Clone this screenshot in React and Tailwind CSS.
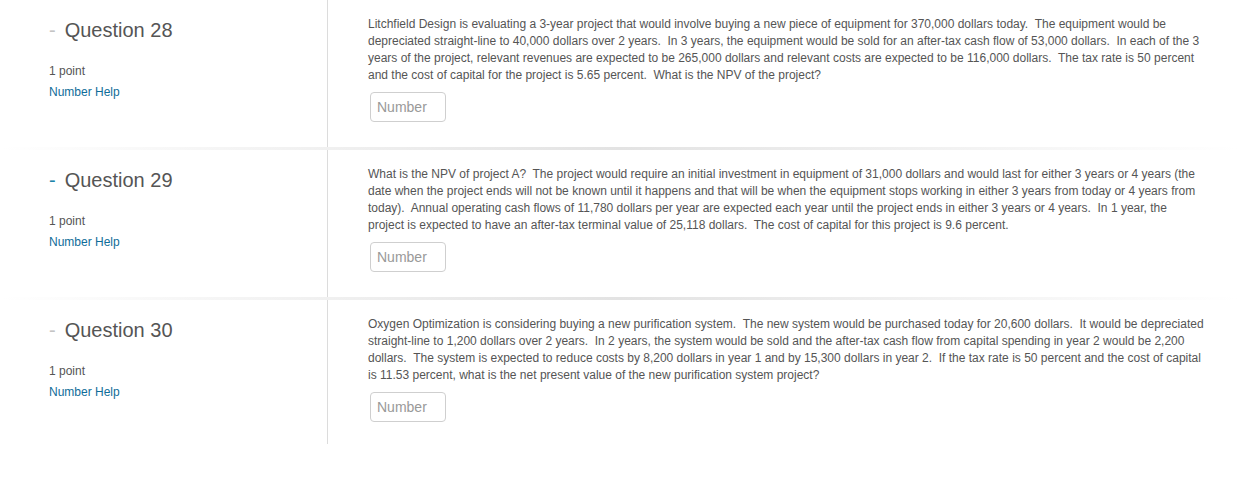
const questions = [
  {
    id: 28,
    activeDash: false,
    lines: [
      "Litchfield Design is evaluating a 3-year project that would involve buying a new piece of equipment for 370,000 dollars today.  The equipment would be",
      "depreciated straight-line to 40,000 dollars over 2 years.  In 3 years, the equipment would be sold for an after-tax cash flow of 53,000 dollars.  In each of the 3",
      "years of the project, relevant revenues are expected to be 265,000 dollars and relevant costs are expected to be 116,000 dollars.  The tax rate is 50 percent",
      "and the cost of capital for the project is 5.65 percent.  What is the NPV of the project?",
    ],
  },
  {
    id: 29,
    activeDash: true,
    lines: [
      "What is the NPV of project A?  The project would require an initial investment in equipment of 31,000 dollars and would last for either 3 years or 4 years (the",
      "date when the project ends will not be known until it happens and that will be when the equipment stops working in either 3 years from today or 4 years from",
      "today).  Annual operating cash flows of 11,780 dollars per year are expected each year until the project ends in either 3 years or 4 years.  In 1 year, the",
      "project is expected to have an after-tax terminal value of 25,118 dollars.  The cost of capital for this project is 9.6 percent.",
    ],
  },
  {
    id: 30,
    activeDash: false,
    lines: [
      "Oxygen Optimization is considering buying a new purification system.  The new system would be purchased today for 20,600 dollars.  It would be depreciated",
      "straight-line to 1,200 dollars over 2 years.  In 2 years, the system would be sold and the after-tax cash flow from capital spending in year 2 would be 2,200",
      "dollars.  The system is expected to reduce costs by 8,200 dollars in year 1 and by 15,300 dollars in year 2.  If the tax rate is 50 percent and the cost of capital",
      "is 11.53 percent, what is the net present value of the new purification system project?",
    ],
  },
];

function Question({ q, last }) {
  return (
    <div className={`flex ${last ? "h-[144px]" : "h-[147px]"}`}>
      <div className="w-[328px] shrink-0 border-r border-[#dcdcdc] pl-[49px] pt-[18px]">
        <h3 className="flex items-center text-[20px] leading-[24px] text-[#555]">
          <span className={`mr-[9px] ${q.activeDash ? "text-[#1d84a8]" : "text-[#c4c4c4]"}`}>-</span>
          Question {q.id}
        </h3>
        <p className="mt-[19px] text-[12px] leading-[21px] text-[#555]">1 point</p>
        <a className="block text-[12px] leading-[21px] text-[#0f6d99]">Number Help</a>
      </div>
      <div className="flex-1 pl-[40px] pt-[16px]">
        <div className="text-[12px] leading-[17px] text-[#555]">
          {q.lines.map((line, i) => (
            <div key={i} className="whitespace-pre">
              {line}
            </div>
          ))}
        </div>
        <input
          type="text"
          placeholder="Number"
          className="ml-[2px] mt-[8px] h-[30px] w-[76px] rounded-[4px] border border-[#cfcfcf] px-[6px] text-[14px] text-[#555] outline-none placeholder:text-[#999]"
        />
      </div>
    </div>
  );
}

export default function App() {
  return (
    <div
      className="h-[479px] w-[1239px] bg-white"
      style={{ fontFamily: '"Liberation Sans", Arial, sans-serif' }}
    >
      {questions.map((q, i) => (
        <div key={q.id}>
          <Question q={q} last={i === questions.length - 1} />
          {i < questions.length - 1 && (
            <div className="h-[3px] bg-gradient-to-r from-transparent via-[#e3e3e3] to-transparent" />
          )}
        </div>
      ))}
    </div>
  );
}
